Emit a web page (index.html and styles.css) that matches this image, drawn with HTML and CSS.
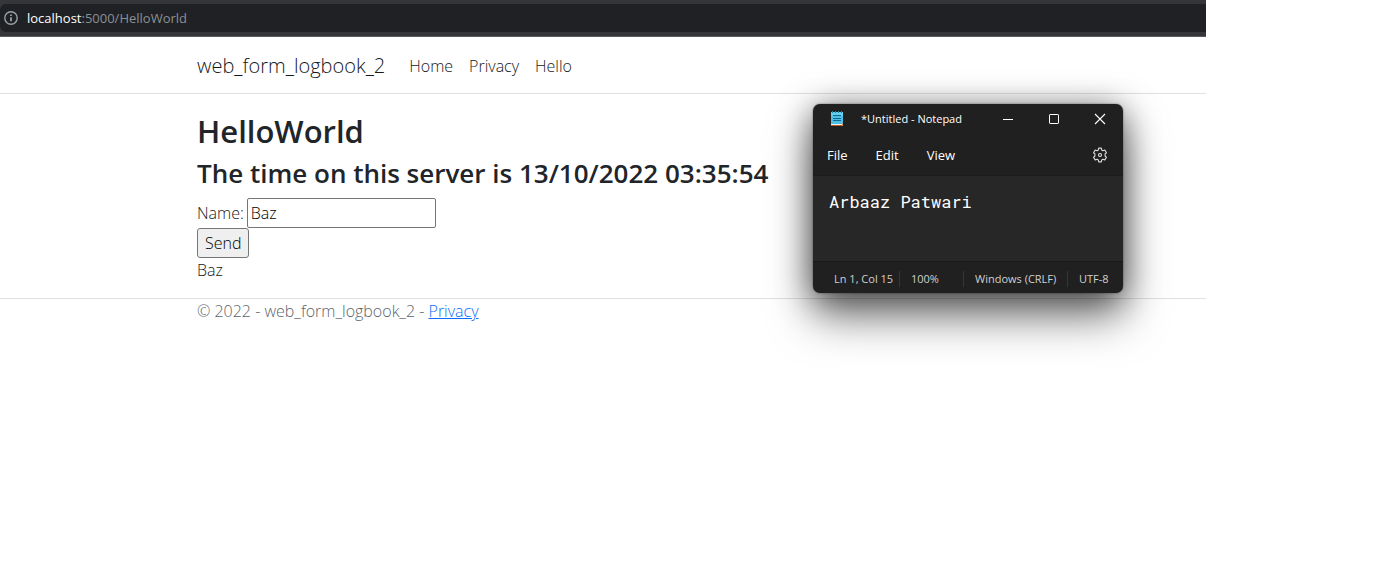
FILE: index.html
```html
<!DOCTYPE html>
<html lang="en">
<head>
<meta charset="utf-8">
<title>HelloWorld - web_form_logbook_2</title>
<link rel="stylesheet" href="styles.css">
</head>
<body>
<div class="browser">
  <div class="toolbar">
    <div class="address">
      <svg class="info" viewBox="0 0 14 14" width="14" height="14" aria-hidden="true"><circle cx="7" cy="7" r="6.2" fill="none" stroke="#9aa0a6" stroke-width="1.4"/><path d="M7 6.2v4M7 3.4v1.5" stroke="#b4b8bc" stroke-width="1.5"/></svg>
      <span class="url"><span class="host">localhost</span>:5000/HelloWorld</span>
    </div>
  </div>
  <header class="site-header">
    <nav class="navbar container">
      <a class="brand" href="#">web_form_logbook_2</a>
      <a class="nav-link" href="#">Home</a>
      <a class="nav-link" href="#">Privacy</a>
      <a class="nav-link" href="#">Hello</a>
    </nav>
  </header>
  <main class="container content">
    <h2 class="title">HelloWorld</h2>
    <h3 class="subtitle">The time on this server is 13/10/2022 03:35:54</h3>
    <form class="form">
      <div class="field">
        <label for="name">Name:</label>
        <input class="name-input" id="name" type="text" value="Baz">
      </div>
      <button class="send" type="button">Send</button>
    </form>
    <div class="result">Baz</div>
  </main>
  <footer class="site-footer">
    <div class="container">© 2022 - web_form_logbook_2 - <a class="footer-link" href="#">Privacy</a></div>
  </footer>
</div>

<section class="notepad" aria-label="Notepad">
  <div class="titlebar">
    <svg class="app-icon" viewBox="0 0 14 17" width="14" height="17" aria-hidden="true"><path d="M1 2h12v12H1z" fill="#50bfe6"/><path d="M1 2h12v4H1z" fill="#67cfee"/><path d="M1 14h12v1H1z" fill="#f3f3f3"/><path d="M1 15h12v1H1z" fill="#b65a20"/><path d="M12 13l1 1v2h-1z" fill="#d98a4c"/><path d="M3 5.5h8M3 8.5h8M3 10.5h8" stroke="#0b6a94"/><path d="M2.5 1v2M5.5 1v2M8.5 1v2M11.5 1v2" stroke="#1787ae"/></svg>
    <span class="window-title">*Untitled - Notepad</span>
    <div class="window-controls">
      <button class="control" type="button" aria-label="Minimize"><svg viewBox="0 0 12 12" width="12" height="12"><path d="M1 6.5h10" stroke="#fff"/></svg></button>
      <button class="control" type="button" aria-label="Maximize"><svg viewBox="0 0 12 12" width="12" height="12"><rect x="1.5" y="1.5" width="9" height="9" rx=".6" fill="none" stroke="#fff"/></svg></button>
      <button class="control" type="button" aria-label="Close"><svg viewBox="0 0 12 12" width="12" height="12"><path d="M1 1l10 10M11 1L1 11" stroke="#fff" stroke-width="1.1"/></svg></button>
    </div>
  </div>
  <div class="menubar">
    <button class="menu" type="button">File</button>
    <button class="menu" type="button">Edit</button>
    <button class="menu" type="button">View</button>
    <button class="settings" type="button" aria-label="Settings"><svg viewBox="0 0 16 16" width="16" height="16"><path d="M6.7 1.1h2.6l.4 2 1.2.7 1.9-.7 1.7 2.6-1.4 1.3v2l1.4 1.3-1.7 2.6-1.9-.7-1.2.7-.4 2H6.7l-.4-2-1.2-.7-1.9.7-1.7-2.6L2.9 9V7L1.5 5.7l1.7-2.6 1.9.7 1.2-.7z" fill="none" stroke="#dcdcdc" stroke-width="1.1" stroke-linejoin="round"/><circle cx="8" cy="8" r="1.5" fill="none" stroke="#e4e4e4" stroke-width="1.1"/></svg></button>
  </div>
  <textarea class="editor" aria-label="Text editor" spellcheck="false">Arbaaz Patwari</textarea>
  <div class="statusbar">
    <span class="cell position">Ln 1, Col 15</span>
    <span class="cell zoom">100%</span>
    <span class="cell ending">Windows (CRLF)</span>
    <span class="cell encoding">UTF-8</span>
  </div>
</section>
</body>
</html>
```
FILE: styles.css
```css
* { box-sizing: border-box; }

body {
  margin: 0;
  background: #fff;
  color: #15181b;
  font: 300 16px/24px "Open Sans", "Noto Sans", sans-serif;
}

button, input, textarea { font: inherit; margin: 0; }

.browser { margin-right: 167px; }

.toolbar {
  padding: 4px 0;
  background: #35363a;
  border-bottom: 1px solid #5a5b5f;
}

.address {
  display: flex;
  align-items: center;
  gap: 9px;
  height: 28px;
  padding-left: 4px;
  background: #202124;
  border-radius: 6px 0 0 6px;
}

.url { color: #8b9095; font-size: 13px; font-weight: 400; }
.host { color: #fff; }

.container { padding-left: 197px; }

.site-header { border-bottom: 1px solid #dee2e6; }

.navbar {
  display: flex;
  align-items: center;
  height: 56px;
  padding-top: 2px;
  gap: 16px;
}

.brand, .nav-link { color: inherit; text-decoration: none; }
.brand { margin-right: 8px; font-size: 20px; }

.content { padding-top: 18px; padding-bottom: 16px; }

.title, .subtitle { margin: 0; color: #212529; font-weight: 600; }
.title { margin-bottom: 6px; font-size: 31px; line-height: 38px; }
.subtitle { margin-bottom: 8px; font-size: 26px; line-height: 34px; }

.field { display: flex; align-items: center; gap: 3px; }

.name-input {
  width: 189px;
  height: 30px;
  padding: 1px 3px;
  border: 1px solid #767676;
  border-radius: 2px;
  background: #fff;
  color: #000;
}

.send {
  display: block;
  height: 30px;
  padding: 1px 7px;
  border: 1px solid #767676;
  border-radius: 3px;
  background: #efefef;
  color: #000;
}

.site-footer {
  border-top: 1px solid #dee2e6;
  color: #5c646b;
}

.footer-link { color: #0d6efd; }

.notepad {
  position: absolute;
  top: 104px;
  left: 813px;
  width: 310px;
  border-radius: 7px;
  background: #202020;
  color: #fff;
  font-weight: 400;
  box-shadow: 0 0 2px rgba(0, 0, 0, .5), 0 24px 44px rgba(0, 0, 0, .5), 0 4px 32px rgba(0, 0, 0, .5);
}

.titlebar {
  display: flex;
  align-items: center;
  height: 29px;
  padding-left: 17px;
}

.window-title { margin-left: 17px; font-size: 11px; }
.window-controls { display: flex; margin-left: auto; }

.control, .menu, .settings {
  padding: 0;
  border: 0;
  background: none;
  color: inherit;
}

.control { display: grid; place-items: center; width: 46px; height: 29px; }

.menubar {
  display: flex;
  align-items: center;
  gap: 28px;
  height: 43px;
  padding: 2px 15px 0 14px;
  border-bottom: 1px solid #1c1c1c;
  font-size: 13px;
}

.settings { display: grid; margin-left: auto; }

.editor {
  display: block;
  width: 100%;
  height: 85px;
  padding: 14px 16px;
  border: 0;
  outline: 0;
  resize: none;
  background: #272727;
  color: #fff;
  font: 17px/24px "Roboto Mono", "DejaVu Sans Mono", monospace;
}

.statusbar {
  display: grid;
  grid-template-columns: 87px 64px 104px 1fr;
  align-items: center;
  height: 32px;
  padding-top: 2px;
  border-top: 1px solid #1a1a1a;
  color: #d0d0d0;
  font-size: 11px;
  line-height: 16px;
  white-space: nowrap;
}

.cell { padding-left: 11px; }
.position { padding-left: 21px; }
.position, .zoom, .ending { border-right: 1px solid #363636; }
```
